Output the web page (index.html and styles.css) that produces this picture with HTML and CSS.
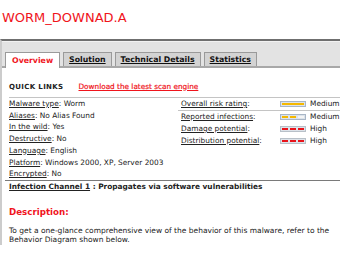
FILE: index.html
```html
<!DOCTYPE html>
<html>
<head>
<meta charset="utf-8">
<link rel="stylesheet" href="styles.css">
</head>
<body>
<h1 class="title">WORM_DOWNAD.A</h1>
<div class="frame">
  <div class="tabbar">
    <div class="tab active">Overview</div>
    <div class="tab"><u>Solution</u></div>
    <div class="tab"><u>Technical Details</u></div>
    <div class="tab"><u>Statistics</u></div>
  </div>
  <div class="content">
    <div class="quick">
      <span class="ql">QUICK LINKS</span>
      <a class="dl">Download the latest scan engine</a>
    </div>
    <div class="details">
      <div class="left">
        <div class="row"><u>Malware type</u>: Worm</div>
        <div class="row"><u>Aliases</u>: No Alias Found</div>
        <div class="row"><u>In the wild</u>: Yes</div>
        <div class="row"><u>Destructive</u>: No</div>
        <div class="row"><u>Language</u>: English</div>
        <div class="row"><u>Platform</u>: Windows 2000, XP, Server 2003</div>
        <div class="row"><u>Encrypted</u>: No</div>
      </div>
      <div class="right">
        <div class="rrow first"><span class="rl"><u>Overall risk rating</u>:</span>
          <svg class="bar" width="26" height="6" viewBox="0 0 26 6"><rect x="0.5" y="0.5" width="25" height="5" fill="#dde3ea" stroke="#a9b6c6"/><rect x="2" y="2" width="22" height="2" fill="#f5b800"/></svg>
          <span class="rv">Medium</span></div>
        <div class="rrow"><span class="rl"><u>Reported infections</u>:</span>
          <svg class="bar" width="26" height="6" viewBox="0 0 26 6"><rect x="0.5" y="0.5" width="25" height="5" fill="#dde3ea" stroke="#a9b6c6"/><rect x="2" y="2" width="6" height="2" fill="#f5b800"/><rect x="10" y="2" width="6" height="2" fill="#f5b800"/><rect x="18" y="2" width="6" height="2" fill="#f4f4f4"/></svg>
          <span class="rv">Medium</span></div>
        <div class="rrow"><span class="rl"><u>Damage potential</u>:</span>
          <svg class="bar" width="26" height="6" viewBox="0 0 26 6"><rect x="0.5" y="0.5" width="25" height="5" fill="#dde3ea" stroke="#b8c0c8"/><rect x="2" y="2" width="6" height="2" fill="#e8141b"/><rect x="10" y="2" width="6" height="2" fill="#e8141b"/><rect x="18" y="2" width="6" height="2" fill="#e8141b"/></svg>
          <span class="rv">High</span></div>
        <div class="rrow"><span class="rl"><u>Distribution potential</u>:</span>
          <svg class="bar" width="26" height="6" viewBox="0 0 26 6"><rect x="0.5" y="0.5" width="25" height="5" fill="#dde3ea" stroke="#b8c0c8"/><rect x="2" y="2" width="6" height="2" fill="#e8141b"/><rect x="10" y="2" width="6" height="2" fill="#e8141b"/><rect x="18" y="2" width="6" height="2" fill="#e8141b"/></svg>
          <span class="rv">High</span></div>
      </div>
    </div>
    <div class="channel"><u>Infection Channel 1</u> : Propagates via software vulnerabilities</div>
    <h2 class="desc">Description:</h2>
    <p class="para">To get a one-glance comprehensive view of the behavior of this malware, refer to the Behavior Diagram shown below.</p>
  </div>
</div>
</body>
</html>
```
FILE: styles.css
```css
html, body {
  margin: 0;
  padding: 0;
  background: #fff;
  font-family: "DejaVu Sans", Verdana, sans-serif;
  color: #222;
}
.title {
  margin: 0;
  padding: 10px 0 0 2px;
  height: 25px;
  box-sizing: border-box;
  font-size: 13px;
  font-weight: normal;
  color: #f0141c;
  line-height: 15px;
}
.frame {
  margin-top: 14px;
  border-top: 2px solid #6f6f6f;
  border-left: 2px solid #cccccc;
}
.tabbar {
  background: #e3e3e3;
  height: 27px;
  box-sizing: border-box;
  display: flex;
  align-items: flex-end;
  padding-left: 3px;
  gap: 3px;
  border-top: 1px solid #f2f2f2;
  border-bottom: 2px solid #a8a8a8;
}
.tab {
  height: 14px;
  box-sizing: border-box;
  border: 1px solid #9a9a9a;
  border-bottom: none;
  background: #d3d3d3;
  font-size: 7.8px;
  font-weight: bold;
  line-height: 13px;
  padding: 0 5px;
  color: #111;
}
.tab.active {
  background: #fff;
  color: #f0141c;
  height: 16px;
  padding: 0 6px;
  margin-bottom: -2px;
  line-height: 15px;
}
.content {
  padding: 0 0 0 7px;
}
.quick {
  display: flex;
  align-items: center;
  gap: 15px;
  height: 30px;
  padding-top: 14px;
  padding-bottom: 6px;
  box-sizing: border-box;
  border-bottom: 1px solid #c4c4c4;
}
.ql {
  font-size: 7px;
  font-weight: bold;
  color: #222;
  letter-spacing: 0.35px;
  line-height: 10px;
}
.dl {
  font-size: 7.3px;
  color: #f0141c;
  text-decoration: underline;
  line-height: 10px;
  -webkit-text-stroke: 0.2px #f0141c;
}
.details {
  display: flex;
}
.left {
  width: 169px;
}
.row {
  font-size: 7.4px;
  line-height: 11.7px;
  white-space: nowrap;
}
.right {
  flex: 1;
}
.rrow {
  display: flex;
  align-items: center;
  font-size: 7.4px;
  line-height: 12px;
  padding-left: 3px;
  white-space: nowrap;
}
.rrow.first {
  border-bottom: 1px solid #c4c4c4;
  line-height: 12px;
}
.rl {
  width: 99px;
}
.bar {
  display: block;
  margin-right: 4px;
}
.channel {
  margin-left: -4px;
  padding-left: 4px;
  border-top: 1px solid #7a7a7a;
  font-size: 7.4px;
  font-weight: bold;
  line-height: 11px;
}
.desc {
  margin: 14px 0 0;
  font-size: 8.7px;
  font-weight: bold;
  color: #f0141c;
  line-height: 12px;
}
.para {
  margin: 8px 0 0;
  font-size: 7.5px;
  line-height: 9.5px;
}
```
